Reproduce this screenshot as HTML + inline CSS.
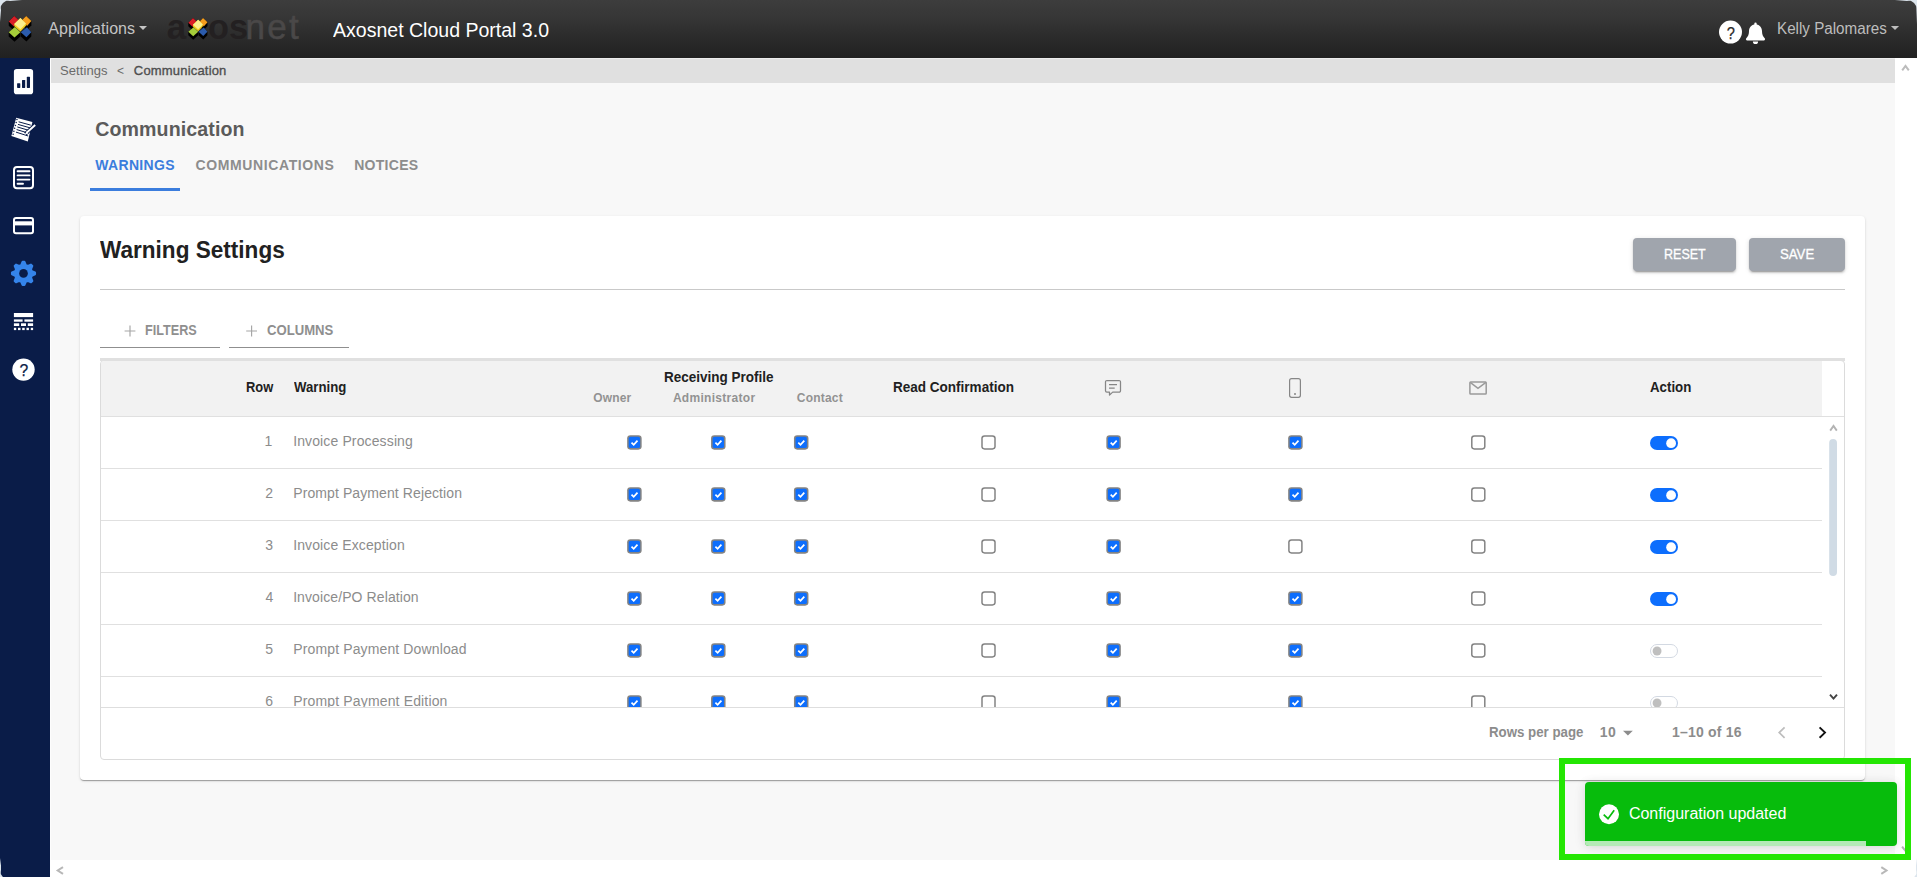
<!DOCTYPE html>
<html lang="en">
<head>
<meta charset="utf-8">
<title>Axosnet Cloud Portal 3.0</title>
<style>
*{box-sizing:border-box}
html,body{margin:0;padding:0}
body{width:1917px;height:877px;overflow:hidden;background:#dce5ed;font-family:'Liberation Sans',sans-serif;position:relative}
.win{position:absolute;left:0;top:0;width:1917px;height:880px;border-radius:10px;overflow:hidden;background:#f8f8f8}
.abs{position:absolute}
.t{position:absolute;white-space:pre;line-height:1;font-family:'Liberation Sans',sans-serif}
.topbar{left:0;top:0;width:1917px;height:58px;background:linear-gradient(#3d3d3d 0,#363636 30%,#2b2b2b 65%,#212121 100%)}
.side{left:0;top:58px;width:50px;height:819px;background:#0a1c48}
.crumb{left:50px;top:58px;width:1845px;height:25px;background:#e0e0e0}
.vscroll{left:1895px;top:58px;width:22px;height:802px;background:#fff}
.hscroll{left:50px;top:860px;width:1867px;height:17px;background:#fff}
.card{left:80px;top:216px;width:1785px;height:564px;background:#fff;border-radius:4px;box-shadow:0 2px 1px -1px rgba(0,0,0,.2),0 1px 1px 0 rgba(0,0,0,.14),0 1px 3px 0 rgba(0,0,0,.12)}
.btn{height:33px;top:238px;background:#a0a5ad;border-radius:4px;box-shadow:0 3px 1px -2px rgba(0,0,0,.2),0 2px 2px 0 rgba(0,0,0,.14),0 1px 5px 0 rgba(0,0,0,.12)}
.hr{left:100px;top:289px;width:1745px;height:1px;background:#c9c9c9}
.ul{top:347px;height:1px;background:#8f8f8f}
.table{left:100px;top:360px;width:1745px;height:400px;border:1px solid #dbdbdb;border-radius:4px;background:#fff;overflow:hidden}
.tbar{left:100px;top:358px;width:1745px;height:3px;background:#e0e0e0}
.thead{left:101px;top:361px;width:1721px;height:55px;background:#f2f2f2;border-top-left-radius:3px}
.theadline{left:101px;top:416px;width:1743px;height:1px;background:#e0e0e0}
.tbody{left:100px;top:417px;width:1745px;height:290px;overflow:hidden}
.tfootline{left:101px;top:707px;width:1743px;height:1px;background:#dedede}
.rb{position:absolute;left:1px;width:1721px;height:1px;background:#e0e0e0}
.cb{position:absolute;display:block}
.tg{position:absolute;width:28px;height:14px;border-radius:7px;border:1px solid #d5dbe3;background:#fff}
.tg i{position:absolute;left:2.5px;top:2px;width:8.6px;height:8.6px;border-radius:50%;background:#bdbdbd}
.tg.on{background:#0d6efd;border-color:#0d6efd}
.tg.on i{left:auto;right:1.4px;top:1.2px;width:9.8px;height:9.8px;background:#fff}
.toast{left:1585px;top:782px;width:312px;height:64px;background:#07bc0c;border-radius:4px;box-shadow:0 1px 10px rgba(0,0,0,.1),0 2px 15px rgba(0,0,0,.05);overflow:hidden}
.toast b{position:absolute;left:0;bottom:0;height:5px;width:281px;background:#b4eab6}
.mark{left:1559px;top:758px;width:352px;height:102px;border:6px solid #24e603}
</style>
</head>
<body>
<div class="win">
<div class="abs" style="left:0;top:0;width:1917px;height:877px">

<div class="abs topbar"></div>
<div class="abs side"></div>
<div class="abs crumb"></div>
<div class="abs vscroll"></div>
<div class="abs" style="left:50px;top:58px;width:1px;height:802px;background:#fdfdfd"></div>
<div class="abs" style="left:50px;top:58px;width:1845px;height:1px;background:#ececec"></div>
<div class="abs hscroll"></div>

<!-- main card -->
<div class="abs" style="left:90px;top:188px;width:90px;height:3px;background:#3b7ddd"></div>
<div class="abs card"></div>
<div class="abs btn" style="left:1633px;width:103px"></div>
<div class="abs btn" style="left:1749px;width:96px"></div>
<div class="abs hr"></div>
<div class="abs ul" style="left:100px;width:120px"></div>
<div class="abs ul" style="left:229px;width:120px"></div>
<div class="abs table"></div>
<div class="abs tbar"></div>
<div class="abs thead"></div>
<div class="abs theadline"></div>
<div class="abs tbody">
<svg class="cb" style="left:527px;top:18px" width="16" height="16" viewBox="0 0 16 16"><g transform="translate(0.15 0.15)"><rect width="14.5" height="14.5" rx="3.3" fill="#838383"/><rect x="1.55" y="1.55" width="11.4" height="11.4" rx="1.9" fill="#0d6efd"/><path d="M4.35 7.45 L6.55 9.65 L10.35 5.45" fill="none" stroke="#fff" stroke-width="1.75"/></g></svg>
<svg class="cb" style="left:611px;top:18px" width="16" height="16" viewBox="0 0 16 16"><g transform="translate(0.05 0.15)"><rect width="14.5" height="14.5" rx="3.3" fill="#838383"/><rect x="1.55" y="1.55" width="11.4" height="11.4" rx="1.9" fill="#0d6efd"/><path d="M4.35 7.45 L6.55 9.65 L10.35 5.45" fill="none" stroke="#fff" stroke-width="1.75"/></g></svg>
<svg class="cb" style="left:693px;top:18px" width="16" height="16" viewBox="0 0 16 16"><g transform="translate(0.95 0.15)"><rect width="14.5" height="14.5" rx="3.3" fill="#838383"/><rect x="1.55" y="1.55" width="11.4" height="11.4" rx="1.9" fill="#0d6efd"/><path d="M4.35 7.45 L6.55 9.65 L10.35 5.45" fill="none" stroke="#fff" stroke-width="1.75"/></g></svg>
<svg class="cb" style="left:881px;top:18px" width="16" height="16" viewBox="0 0 16 16"><g transform="translate(0.25 0.15)"><rect width="14.5" height="14.5" rx="3.3" fill="#838383"/><rect x="1.5" y="1.5" width="11.5" height="11.5" rx="1.9" fill="#fff"/></g></svg>
<svg class="cb" style="left:1006px;top:18px" width="16" height="16" viewBox="0 0 16 16"><g transform="translate(0.35 0.15)"><rect width="14.5" height="14.5" rx="3.3" fill="#838383"/><rect x="1.55" y="1.55" width="11.4" height="11.4" rx="1.9" fill="#0d6efd"/><path d="M4.35 7.45 L6.55 9.65 L10.35 5.45" fill="none" stroke="#fff" stroke-width="1.75"/></g></svg>
<svg class="cb" style="left:1188px;top:18px" width="16" height="16" viewBox="0 0 16 16"><g transform="translate(0.15 0.15)"><rect width="14.5" height="14.5" rx="3.3" fill="#838383"/><rect x="1.55" y="1.55" width="11.4" height="11.4" rx="1.9" fill="#0d6efd"/><path d="M4.35 7.45 L6.55 9.65 L10.35 5.45" fill="none" stroke="#fff" stroke-width="1.75"/></g></svg>
<svg class="cb" style="left:1371px;top:18px" width="16" height="16" viewBox="0 0 16 16"><g transform="translate(0.05 0.15)"><rect width="14.5" height="14.5" rx="3.3" fill="#838383"/><rect x="1.5" y="1.5" width="11.5" height="11.5" rx="1.9" fill="#fff"/></g></svg>
<svg class="cb" style="left:1550px;top:19px" width="28" height="14" viewBox="0 0 28 14"><rect width="28" height="14" rx="7" fill="#0d6efd"/><circle cx="21.1" cy="7.2" r="4.9" fill="#fff"/></svg>
<div class="rb" style="top:51px"></div>
<svg class="cb" style="left:527px;top:70px" width="16" height="16" viewBox="0 0 16 16"><g transform="translate(0.15 0.15)"><rect width="14.5" height="14.5" rx="3.3" fill="#838383"/><rect x="1.55" y="1.55" width="11.4" height="11.4" rx="1.9" fill="#0d6efd"/><path d="M4.35 7.45 L6.55 9.65 L10.35 5.45" fill="none" stroke="#fff" stroke-width="1.75"/></g></svg>
<svg class="cb" style="left:611px;top:70px" width="16" height="16" viewBox="0 0 16 16"><g transform="translate(0.05 0.15)"><rect width="14.5" height="14.5" rx="3.3" fill="#838383"/><rect x="1.55" y="1.55" width="11.4" height="11.4" rx="1.9" fill="#0d6efd"/><path d="M4.35 7.45 L6.55 9.65 L10.35 5.45" fill="none" stroke="#fff" stroke-width="1.75"/></g></svg>
<svg class="cb" style="left:693px;top:70px" width="16" height="16" viewBox="0 0 16 16"><g transform="translate(0.95 0.15)"><rect width="14.5" height="14.5" rx="3.3" fill="#838383"/><rect x="1.55" y="1.55" width="11.4" height="11.4" rx="1.9" fill="#0d6efd"/><path d="M4.35 7.45 L6.55 9.65 L10.35 5.45" fill="none" stroke="#fff" stroke-width="1.75"/></g></svg>
<svg class="cb" style="left:881px;top:70px" width="16" height="16" viewBox="0 0 16 16"><g transform="translate(0.25 0.15)"><rect width="14.5" height="14.5" rx="3.3" fill="#838383"/><rect x="1.5" y="1.5" width="11.5" height="11.5" rx="1.9" fill="#fff"/></g></svg>
<svg class="cb" style="left:1006px;top:70px" width="16" height="16" viewBox="0 0 16 16"><g transform="translate(0.35 0.15)"><rect width="14.5" height="14.5" rx="3.3" fill="#838383"/><rect x="1.55" y="1.55" width="11.4" height="11.4" rx="1.9" fill="#0d6efd"/><path d="M4.35 7.45 L6.55 9.65 L10.35 5.45" fill="none" stroke="#fff" stroke-width="1.75"/></g></svg>
<svg class="cb" style="left:1188px;top:70px" width="16" height="16" viewBox="0 0 16 16"><g transform="translate(0.15 0.15)"><rect width="14.5" height="14.5" rx="3.3" fill="#838383"/><rect x="1.55" y="1.55" width="11.4" height="11.4" rx="1.9" fill="#0d6efd"/><path d="M4.35 7.45 L6.55 9.65 L10.35 5.45" fill="none" stroke="#fff" stroke-width="1.75"/></g></svg>
<svg class="cb" style="left:1371px;top:70px" width="16" height="16" viewBox="0 0 16 16"><g transform="translate(0.05 0.15)"><rect width="14.5" height="14.5" rx="3.3" fill="#838383"/><rect x="1.5" y="1.5" width="11.5" height="11.5" rx="1.9" fill="#fff"/></g></svg>
<svg class="cb" style="left:1550px;top:71px" width="28" height="14" viewBox="0 0 28 14"><rect width="28" height="14" rx="7" fill="#0d6efd"/><circle cx="21.1" cy="7.2" r="4.9" fill="#fff"/></svg>
<div class="rb" style="top:103px"></div>
<svg class="cb" style="left:527px;top:122px" width="16" height="16" viewBox="0 0 16 16"><g transform="translate(0.15 0.15)"><rect width="14.5" height="14.5" rx="3.3" fill="#838383"/><rect x="1.55" y="1.55" width="11.4" height="11.4" rx="1.9" fill="#0d6efd"/><path d="M4.35 7.45 L6.55 9.65 L10.35 5.45" fill="none" stroke="#fff" stroke-width="1.75"/></g></svg>
<svg class="cb" style="left:611px;top:122px" width="16" height="16" viewBox="0 0 16 16"><g transform="translate(0.05 0.15)"><rect width="14.5" height="14.5" rx="3.3" fill="#838383"/><rect x="1.55" y="1.55" width="11.4" height="11.4" rx="1.9" fill="#0d6efd"/><path d="M4.35 7.45 L6.55 9.65 L10.35 5.45" fill="none" stroke="#fff" stroke-width="1.75"/></g></svg>
<svg class="cb" style="left:693px;top:122px" width="16" height="16" viewBox="0 0 16 16"><g transform="translate(0.95 0.15)"><rect width="14.5" height="14.5" rx="3.3" fill="#838383"/><rect x="1.55" y="1.55" width="11.4" height="11.4" rx="1.9" fill="#0d6efd"/><path d="M4.35 7.45 L6.55 9.65 L10.35 5.45" fill="none" stroke="#fff" stroke-width="1.75"/></g></svg>
<svg class="cb" style="left:881px;top:122px" width="16" height="16" viewBox="0 0 16 16"><g transform="translate(0.25 0.15)"><rect width="14.5" height="14.5" rx="3.3" fill="#838383"/><rect x="1.5" y="1.5" width="11.5" height="11.5" rx="1.9" fill="#fff"/></g></svg>
<svg class="cb" style="left:1006px;top:122px" width="16" height="16" viewBox="0 0 16 16"><g transform="translate(0.35 0.15)"><rect width="14.5" height="14.5" rx="3.3" fill="#838383"/><rect x="1.55" y="1.55" width="11.4" height="11.4" rx="1.9" fill="#0d6efd"/><path d="M4.35 7.45 L6.55 9.65 L10.35 5.45" fill="none" stroke="#fff" stroke-width="1.75"/></g></svg>
<svg class="cb" style="left:1188px;top:122px" width="16" height="16" viewBox="0 0 16 16"><g transform="translate(0.15 0.15)"><rect width="14.5" height="14.5" rx="3.3" fill="#838383"/><rect x="1.5" y="1.5" width="11.5" height="11.5" rx="1.9" fill="#fff"/></g></svg>
<svg class="cb" style="left:1371px;top:122px" width="16" height="16" viewBox="0 0 16 16"><g transform="translate(0.05 0.15)"><rect width="14.5" height="14.5" rx="3.3" fill="#838383"/><rect x="1.5" y="1.5" width="11.5" height="11.5" rx="1.9" fill="#fff"/></g></svg>
<svg class="cb" style="left:1550px;top:123px" width="28" height="14" viewBox="0 0 28 14"><rect width="28" height="14" rx="7" fill="#0d6efd"/><circle cx="21.1" cy="7.2" r="4.9" fill="#fff"/></svg>
<div class="rb" style="top:155px"></div>
<svg class="cb" style="left:527px;top:174px" width="16" height="16" viewBox="0 0 16 16"><g transform="translate(0.15 0.15)"><rect width="14.5" height="14.5" rx="3.3" fill="#838383"/><rect x="1.55" y="1.55" width="11.4" height="11.4" rx="1.9" fill="#0d6efd"/><path d="M4.35 7.45 L6.55 9.65 L10.35 5.45" fill="none" stroke="#fff" stroke-width="1.75"/></g></svg>
<svg class="cb" style="left:611px;top:174px" width="16" height="16" viewBox="0 0 16 16"><g transform="translate(0.05 0.15)"><rect width="14.5" height="14.5" rx="3.3" fill="#838383"/><rect x="1.55" y="1.55" width="11.4" height="11.4" rx="1.9" fill="#0d6efd"/><path d="M4.35 7.45 L6.55 9.65 L10.35 5.45" fill="none" stroke="#fff" stroke-width="1.75"/></g></svg>
<svg class="cb" style="left:693px;top:174px" width="16" height="16" viewBox="0 0 16 16"><g transform="translate(0.95 0.15)"><rect width="14.5" height="14.5" rx="3.3" fill="#838383"/><rect x="1.55" y="1.55" width="11.4" height="11.4" rx="1.9" fill="#0d6efd"/><path d="M4.35 7.45 L6.55 9.65 L10.35 5.45" fill="none" stroke="#fff" stroke-width="1.75"/></g></svg>
<svg class="cb" style="left:881px;top:174px" width="16" height="16" viewBox="0 0 16 16"><g transform="translate(0.25 0.15)"><rect width="14.5" height="14.5" rx="3.3" fill="#838383"/><rect x="1.5" y="1.5" width="11.5" height="11.5" rx="1.9" fill="#fff"/></g></svg>
<svg class="cb" style="left:1006px;top:174px" width="16" height="16" viewBox="0 0 16 16"><g transform="translate(0.35 0.15)"><rect width="14.5" height="14.5" rx="3.3" fill="#838383"/><rect x="1.55" y="1.55" width="11.4" height="11.4" rx="1.9" fill="#0d6efd"/><path d="M4.35 7.45 L6.55 9.65 L10.35 5.45" fill="none" stroke="#fff" stroke-width="1.75"/></g></svg>
<svg class="cb" style="left:1188px;top:174px" width="16" height="16" viewBox="0 0 16 16"><g transform="translate(0.15 0.15)"><rect width="14.5" height="14.5" rx="3.3" fill="#838383"/><rect x="1.55" y="1.55" width="11.4" height="11.4" rx="1.9" fill="#0d6efd"/><path d="M4.35 7.45 L6.55 9.65 L10.35 5.45" fill="none" stroke="#fff" stroke-width="1.75"/></g></svg>
<svg class="cb" style="left:1371px;top:174px" width="16" height="16" viewBox="0 0 16 16"><g transform="translate(0.05 0.15)"><rect width="14.5" height="14.5" rx="3.3" fill="#838383"/><rect x="1.5" y="1.5" width="11.5" height="11.5" rx="1.9" fill="#fff"/></g></svg>
<svg class="cb" style="left:1550px;top:175px" width="28" height="14" viewBox="0 0 28 14"><rect width="28" height="14" rx="7" fill="#0d6efd"/><circle cx="21.1" cy="7.2" r="4.9" fill="#fff"/></svg>
<div class="rb" style="top:207px"></div>
<svg class="cb" style="left:527px;top:226px" width="16" height="16" viewBox="0 0 16 16"><g transform="translate(0.15 0.15)"><rect width="14.5" height="14.5" rx="3.3" fill="#838383"/><rect x="1.55" y="1.55" width="11.4" height="11.4" rx="1.9" fill="#0d6efd"/><path d="M4.35 7.45 L6.55 9.65 L10.35 5.45" fill="none" stroke="#fff" stroke-width="1.75"/></g></svg>
<svg class="cb" style="left:611px;top:226px" width="16" height="16" viewBox="0 0 16 16"><g transform="translate(0.05 0.15)"><rect width="14.5" height="14.5" rx="3.3" fill="#838383"/><rect x="1.55" y="1.55" width="11.4" height="11.4" rx="1.9" fill="#0d6efd"/><path d="M4.35 7.45 L6.55 9.65 L10.35 5.45" fill="none" stroke="#fff" stroke-width="1.75"/></g></svg>
<svg class="cb" style="left:693px;top:226px" width="16" height="16" viewBox="0 0 16 16"><g transform="translate(0.95 0.15)"><rect width="14.5" height="14.5" rx="3.3" fill="#838383"/><rect x="1.55" y="1.55" width="11.4" height="11.4" rx="1.9" fill="#0d6efd"/><path d="M4.35 7.45 L6.55 9.65 L10.35 5.45" fill="none" stroke="#fff" stroke-width="1.75"/></g></svg>
<svg class="cb" style="left:881px;top:226px" width="16" height="16" viewBox="0 0 16 16"><g transform="translate(0.25 0.15)"><rect width="14.5" height="14.5" rx="3.3" fill="#838383"/><rect x="1.5" y="1.5" width="11.5" height="11.5" rx="1.9" fill="#fff"/></g></svg>
<svg class="cb" style="left:1006px;top:226px" width="16" height="16" viewBox="0 0 16 16"><g transform="translate(0.35 0.15)"><rect width="14.5" height="14.5" rx="3.3" fill="#838383"/><rect x="1.55" y="1.55" width="11.4" height="11.4" rx="1.9" fill="#0d6efd"/><path d="M4.35 7.45 L6.55 9.65 L10.35 5.45" fill="none" stroke="#fff" stroke-width="1.75"/></g></svg>
<svg class="cb" style="left:1188px;top:226px" width="16" height="16" viewBox="0 0 16 16"><g transform="translate(0.15 0.15)"><rect width="14.5" height="14.5" rx="3.3" fill="#838383"/><rect x="1.55" y="1.55" width="11.4" height="11.4" rx="1.9" fill="#0d6efd"/><path d="M4.35 7.45 L6.55 9.65 L10.35 5.45" fill="none" stroke="#fff" stroke-width="1.75"/></g></svg>
<svg class="cb" style="left:1371px;top:226px" width="16" height="16" viewBox="0 0 16 16"><g transform="translate(0.05 0.15)"><rect width="14.5" height="14.5" rx="3.3" fill="#838383"/><rect x="1.5" y="1.5" width="11.5" height="11.5" rx="1.9" fill="#fff"/></g></svg>
<svg class="cb" style="left:1550px;top:227px" width="28" height="14" viewBox="0 0 28 14"><rect x=".5" y=".5" width="27" height="13" rx="6.5" fill="#fff" stroke="#d3d9e2"/><circle cx="7.05" cy="7" r="4.45" fill="#bfbfbf"/></svg>
<div class="rb" style="top:259px"></div>
<svg class="cb" style="left:527px;top:278px" width="16" height="16" viewBox="0 0 16 16"><g transform="translate(0.15 0.15)"><rect width="14.5" height="14.5" rx="3.3" fill="#838383"/><rect x="1.55" y="1.55" width="11.4" height="11.4" rx="1.9" fill="#0d6efd"/><path d="M4.35 7.45 L6.55 9.65 L10.35 5.45" fill="none" stroke="#fff" stroke-width="1.75"/></g></svg>
<svg class="cb" style="left:611px;top:278px" width="16" height="16" viewBox="0 0 16 16"><g transform="translate(0.05 0.15)"><rect width="14.5" height="14.5" rx="3.3" fill="#838383"/><rect x="1.55" y="1.55" width="11.4" height="11.4" rx="1.9" fill="#0d6efd"/><path d="M4.35 7.45 L6.55 9.65 L10.35 5.45" fill="none" stroke="#fff" stroke-width="1.75"/></g></svg>
<svg class="cb" style="left:693px;top:278px" width="16" height="16" viewBox="0 0 16 16"><g transform="translate(0.95 0.15)"><rect width="14.5" height="14.5" rx="3.3" fill="#838383"/><rect x="1.55" y="1.55" width="11.4" height="11.4" rx="1.9" fill="#0d6efd"/><path d="M4.35 7.45 L6.55 9.65 L10.35 5.45" fill="none" stroke="#fff" stroke-width="1.75"/></g></svg>
<svg class="cb" style="left:881px;top:278px" width="16" height="16" viewBox="0 0 16 16"><g transform="translate(0.25 0.15)"><rect width="14.5" height="14.5" rx="3.3" fill="#838383"/><rect x="1.5" y="1.5" width="11.5" height="11.5" rx="1.9" fill="#fff"/></g></svg>
<svg class="cb" style="left:1006px;top:278px" width="16" height="16" viewBox="0 0 16 16"><g transform="translate(0.35 0.15)"><rect width="14.5" height="14.5" rx="3.3" fill="#838383"/><rect x="1.55" y="1.55" width="11.4" height="11.4" rx="1.9" fill="#0d6efd"/><path d="M4.35 7.45 L6.55 9.65 L10.35 5.45" fill="none" stroke="#fff" stroke-width="1.75"/></g></svg>
<svg class="cb" style="left:1188px;top:278px" width="16" height="16" viewBox="0 0 16 16"><g transform="translate(0.15 0.15)"><rect width="14.5" height="14.5" rx="3.3" fill="#838383"/><rect x="1.55" y="1.55" width="11.4" height="11.4" rx="1.9" fill="#0d6efd"/><path d="M4.35 7.45 L6.55 9.65 L10.35 5.45" fill="none" stroke="#fff" stroke-width="1.75"/></g></svg>
<svg class="cb" style="left:1371px;top:278px" width="16" height="16" viewBox="0 0 16 16"><g transform="translate(0.05 0.15)"><rect width="14.5" height="14.5" rx="3.3" fill="#838383"/><rect x="1.5" y="1.5" width="11.5" height="11.5" rx="1.9" fill="#fff"/></g></svg>
<svg class="cb" style="left:1550px;top:279px" width="28" height="14" viewBox="0 0 28 14"><rect x=".5" y=".5" width="27" height="13" rx="6.5" fill="#fff" stroke="#d3d9e2"/><circle cx="7.05" cy="7" r="4.45" fill="#bfbfbf"/></svg>
<div class="rb" style="top:311px"></div>
<span class="t" style="left:164.38px;top:17px;font-size:14px;font-weight:400;color:#8c8c8c;">1</span>
<span class="t" style="left:193.14px;top:17px;font-size:14px;font-weight:400;color:#8c8c8c;letter-spacing:0.129px;">Invoice Processing</span>
<span class="t" style="left:165.31px;top:69px;font-size:14px;font-weight:400;color:#8c8c8c;">2</span>
<span class="t" style="left:193.25px;top:69px;font-size:14px;font-weight:400;color:#8c8c8c;letter-spacing:0.096px;">Prompt Payment Rejection</span>
<span class="t" style="left:165.29px;top:121px;font-size:14px;font-weight:400;color:#8c8c8c;">3</span>
<span class="t" style="left:193.14px;top:121px;font-size:14px;font-weight:400;color:#8c8c8c;letter-spacing:0.113px;">Invoice Exception</span>
<span class="t" style="left:165.38px;top:173px;font-size:14px;font-weight:400;color:#8c8c8c;">4</span>
<span class="t" style="left:193.14px;top:173px;font-size:14px;font-weight:400;color:#8c8c8c;letter-spacing:0.100px;">Invoice/PO Relation</span>
<span class="t" style="left:165.31px;top:225px;font-size:14px;font-weight:400;color:#8c8c8c;">5</span>
<span class="t" style="left:193.25px;top:225px;font-size:14px;font-weight:400;color:#8c8c8c;letter-spacing:0.129px;">Prompt Payment Download</span>
<span class="t" style="left:165.35px;top:277px;font-size:14px;font-weight:400;color:#8c8c8c;">6</span>
<span class="t" style="left:193.25px;top:277px;font-size:14px;font-weight:400;color:#8c8c8c;letter-spacing:0.150px;">Prompt Payment Edition</span>
</div>
<div class="abs tfootline"></div>

<svg class="abs" style="left:1895px;top:840px" width="22" height="20" viewBox="1895 840 22 20"><path d="M1902.1 846.6 L1905.5 850.9 L1908.9 846.6" fill="none" stroke="#b4b0b6" stroke-width="2"/></svg>
<!-- toast -->
<div class="abs toast"><b></b></div>
<div class="abs mark"></div>

<svg class="abs" style="left:0;top:0" width="1917" height="877" viewBox="0 0 1917 877">
<g transform="translate(0 0) scale(1.0)">
<polygon points="8.72,21.50 14.26,15.95 18.30,19.85 18.30,24.05 13.85,30.60 8.72,25.70" fill="#000"/>
<polygon points="22.40,19.65 26.17,15.95 31.40,21.08 31.40,25.28 27.00,30.20 22.40,23.85" fill="#000"/>
<polygon points="8.70,32.20 14.90,27.00 20.40,32.20 20.40,36.40 14.50,41.70 8.70,36.40" fill="#000"/>
<polygon points="20.80,32.20 27.00,27.20 31.30,32.20 31.30,36.40 26.40,41.50 20.80,36.40" fill="#000"/>
<polygon points="14.26,15.95 18.30,19.85 13.85,26.40 8.72,21.50" fill="#d81e26"/>
<polygon points="26.17,15.95 31.40,21.08 27.00,26.00 22.40,19.65" fill="#f59d1c"/>
<polygon points="14.90,27.00 20.40,32.20 14.50,37.50 8.70,32.20" fill="#a5cd39"/>
<polygon points="27.00,27.20 31.30,32.20 26.40,37.30 20.80,32.20" fill="#2b5bab"/>
<polygon points="14.26,23.96 20.40,18.00 25.96,23.50 25.96,25.70 20.40,31.50 14.26,26.16" fill="#f3cf1d"/>
<polygon points="20.40,18.00 25.96,23.50 20.40,29.30 14.26,23.96" fill="#fbee8d"/>
</g>
<g transform="translate(180.93980000000002 4.506300000000001) scale(0.846)">
<polygon points="8.72,21.50 14.26,15.95 18.30,19.85 18.30,24.05 13.85,30.60 8.72,25.70" fill="#000"/>
<polygon points="22.40,19.65 26.17,15.95 31.40,21.08 31.40,25.28 27.00,30.20 22.40,23.85" fill="#000"/>
<polygon points="8.70,32.20 14.90,27.00 20.40,32.20 20.40,36.40 14.50,41.70 8.70,36.40" fill="#000"/>
<polygon points="20.80,32.20 27.00,27.20 31.30,32.20 31.30,36.40 26.40,41.50 20.80,36.40" fill="#000"/>
<polygon points="14.26,15.95 18.30,19.85 13.85,26.40 8.72,21.50" fill="#d81e26"/>
<polygon points="26.17,15.95 31.40,21.08 27.00,26.00 22.40,19.65" fill="#f59d1c"/>
<polygon points="14.90,27.00 20.40,32.20 14.50,37.50 8.70,32.20" fill="#a5cd39"/>
<polygon points="27.00,27.20 31.30,32.20 26.40,37.30 20.80,32.20" fill="#2b5bab"/>
<polygon points="14.26,23.96 20.40,18.00 25.96,23.50 25.96,25.70 20.40,31.50 14.26,26.16" fill="#f3cf1d"/>
<polygon points="20.40,18.00 25.96,23.50 20.40,29.30 14.26,23.96" fill="#fbee8d"/>
</g>
<path d="M139 26 h8 l-4 4 z" fill="#c4c4c4"/>
<path d="M1890.9 26 h8.2 l-4.1 4.1 z" fill="#bdbdbd"/>
<circle cx="1730.5" cy="32.1" r="11.5" fill="#fff"/>
<path d="M1754.3 23.7 a1.2 1.2 0 0 1 2.4 0 v0.8 c3.1 .6 5.3 3.3 5.3 6.6 c0 3.2 .9 5.4 2.7 7.2 c.8 .8 .3 2.1 -.9 2.1 h-16.6 c-1.2 0 -1.7 -1.3 -.9 -2.1 c1.8 -1.8 2.7 -4 2.7 -7.2 c0 -3.3 2.2 -6 5.3 -6.6 z" fill="#fff"/>
<path d="M1752.9 41.4 h5.2 a2.6 2.6 0 0 1 -5.2 0 z" fill="#fff"/>
<rect x="13.9" y="68.9" width="19.2" height="25.3" rx="2.8" fill="#fff"/>
<rect x="17.1" y="83.2" width="3.2" height="4.7" rx=".6" fill="#0a1c48"/>
<rect x="22" y="80" width="3.2" height="7.9" rx=".6" fill="#0a1c48"/>
<rect x="26.8" y="76.8" width="3.2" height="11.1" rx=".6" fill="#0a1c48"/>
<polygon points="16.2,117.8 32.4,122.1 27.8,141.5 11.4,136" fill="#fff"/>
<path d="M18.63 121.79 L30.81 125.17" stroke="#0a1c48" stroke-width="1"/>
<path d="M17.96 124.38 L30.16 127.88" stroke="#0a1c48" stroke-width="1"/>
<path d="M17.30 126.96 L29.52 130.59" stroke="#0a1c48" stroke-width="1"/>
<path d="M16.63 129.54 L28.87 133.30" stroke="#0a1c48" stroke-width="1"/>
<path d="M15.97 132.12 L28.22 136.00" stroke="#0a1c48" stroke-width="1"/>
<circle cx="16.95" cy="119.56" r=".75" fill="#0a1c48"/>
<circle cx="16.19" cy="122.49" r=".75" fill="#0a1c48"/>
<circle cx="15.42" cy="125.41" r=".75" fill="#0a1c48"/>
<circle cx="14.65" cy="128.34" r=".75" fill="#0a1c48"/>
<circle cx="13.89" cy="131.27" r=".75" fill="#0a1c48"/>
<circle cx="13.12" cy="134.19" r=".75" fill="#0a1c48"/>
<path d="M35.2 125 L25.4 133.9" stroke="#0a1c48" stroke-width="3.8" stroke-linecap="butt"/>
<path d="M35.2 125 L26.6 132.8" stroke="#fff" stroke-width="1.9" stroke-linecap="butt"/>
<path d="M26.9 131.2 L24.6 134.6 L28.4 133.6 z" fill="#fff"/>
<rect x="14" y="167" width="19" height="21.3" rx="3" fill="none" stroke="#fff" stroke-width="2"/>
<path d="M17.6 171.2 H29.5" stroke="#fff" stroke-width="1.9" stroke-linecap="round"/>
<path d="M17.6 175.4 H29.5" stroke="#fff" stroke-width="1.9" stroke-linecap="round"/>
<path d="M17.6 179.6 H29.5" stroke="#fff" stroke-width="1.9" stroke-linecap="round"/>
<path d="M17.6 183.8 H23.0" stroke="#fff" stroke-width="1.9" stroke-linecap="round"/>
<rect x="14" y="218" width="19" height="15.2" rx="2" fill="none" stroke="#fff" stroke-width="2"/>
<rect x="14" y="221.3" width="19" height="4.1" fill="#fff"/>
<path d="M21.27 265.09 L22.60 261.94 L24.40 261.94 L25.73 265.09 L26.71 265.64 L27.80 265.95 L30.97 264.66 L32.24 265.93 L30.95 269.10 L31.26 270.19 L31.81 271.17 L34.96 272.50 L34.96 274.30 L31.81 275.63 L31.26 276.61 L30.95 277.70 L32.24 280.87 L30.97 282.14 L27.80 280.85 L26.71 281.16 L25.73 281.71 L24.40 284.86 L22.60 284.86 L21.27 281.71 L20.29 281.16 L19.20 280.85 L16.03 282.14 L14.76 280.87 L16.05 277.70 L15.74 276.61 L15.19 275.63 L12.04 274.30 L12.04 272.50 L15.19 271.17 L15.74 270.19 L16.05 269.10 L14.76 265.93 L16.03 264.66 L19.20 265.95 L20.29 265.64Z" fill="#3584ea" stroke="#3584ea" stroke-width="2.2" stroke-linejoin="round"/><circle cx="23.5" cy="273.4" r="4.35" fill="#0a1c48"/>
<rect x="13.9" y="313" width="19.2" height="4.1" fill="#fff"/>
<rect x="13.9" y="319.4" width="8.70" height="2.3" fill="#fff"/>
<rect x="24.4" y="319.4" width="8.70" height="2.3" fill="#fff"/>
<rect x="13.9" y="323.3" width="5.30" height="2.7" fill="#fff"/>
<rect x="21" y="323.3" width="5.00" height="2.7" fill="#fff"/>
<rect x="27.8" y="323.3" width="5.30" height="2.7" fill="#fff"/>
<rect x="13.9" y="327.8" width="2.30" height="2.3" fill="#fff"/>
<rect x="18" y="327.8" width="2.50" height="2.3" fill="#fff"/>
<rect x="22.2" y="327.8" width="2.50" height="2.3" fill="#fff"/>
<rect x="26.5" y="327.8" width="2.40" height="2.3" fill="#fff"/>
<rect x="30.8" y="327.8" width="2.30" height="2.3" fill="#fff"/>
<circle cx="23.5" cy="369.6" r="11.2" fill="#fff"/>
<path d="M124.6 331 H135.4 M130 325.6 V336.4" stroke="#a6a6a6" stroke-width="1.15" fill="none"/>
<path d="M246.2 331 H257.0 M251.6 325.6 V336.4" stroke="#a6a6a6" stroke-width="1.15" fill="none"/>
<path d="M1106.9 380.5 h12.2 a1.4 1.4 0 0 1 1.4 1.4 v8.8 a1.4 1.4 0 0 1 -1.4 1.4 h-6.4 l-3.2 3 v-3 h-2.6 a1.4 1.4 0 0 1 -1.4 -1.4 v-8.8 a1.4 1.4 0 0 1 1.4 -1.4 z" fill="none" stroke="#868686" stroke-width="1.25" stroke-linejoin="round"/>
<path d="M1109 384.6 H1117 M1109 388 H1114.7" stroke="#868686" stroke-width="1.25"/>
<rect x="1289.6" y="378.7" width="10.8" height="18.6" rx="2" fill="none" stroke="#868686" stroke-width="1.2"/>
<circle cx="1295" cy="394.1" r="1" fill="#868686"/>
<rect x="1469.9" y="381.9" width="16.3" height="12.2" rx=".8" fill="none" stroke="#9a9a9a" stroke-width="1.5"/>
<path d="M1470.2 382.3 L1478 388.4 L1485.9 382.3" fill="none" stroke="#9a9a9a" stroke-width="1.5"/>
<path d="M1830.2 430.6 L1833.5 426 L1836.8 430.6" fill="none" stroke="#b3b3b3" stroke-width="1.9" stroke-linecap="butt" stroke-linejoin="miter"/>
<rect x="1829.2" y="439" width="7.8" height="137" rx="3.9" fill="#d0dbe5"/>
<path d="M1830 694.6 L1833.5 698.6 L1837 694.6" fill="none" stroke="#444" stroke-width="1.9" stroke-linecap="butt" stroke-linejoin="miter"/>
<path d="M1902.2 70.4 L1905.5 66 L1908.8 70.4" fill="none" stroke="#bcbcbc" stroke-width="2" stroke-linecap="butt" stroke-linejoin="miter"/>
<path d="M63 867.1 L57.7 870.5 L63 873.9" fill="none" stroke="#b8b8b8" stroke-width="2" stroke-linecap="butt" stroke-linejoin="miter"/>
<path d="M1881.3 867.1 L1886.5 870.5 L1881.3 873.9" fill="none" stroke="#b8b8b8" stroke-width="2" stroke-linecap="butt" stroke-linejoin="miter"/>
<path d="M1623 730.7 h9.8 l-4.9 4.9 z" fill="#8c8c8c"/>
<path d="M1784.6 727.4 L1779.2 732.6 L1784.6 737.8" fill="none" stroke="#bdbdbd" stroke-width="1.7" stroke-linecap="butt" stroke-linejoin="miter"/>
<path d="M1819.6 727.4 L1825 732.6 L1819.6 737.8" fill="none" stroke="#111" stroke-width="1.9" stroke-linecap="butt" stroke-linejoin="miter"/>
<circle cx="1609" cy="814.2" r="10" fill="#fff"/>
<path d="M1603.7 814.6 L1608 818.7 L1614.2 810.2" fill="none" stroke="#07bc0c" stroke-width="1.7"/>
</svg>


<span class="t" style="left:48.21px;top:21px;font-size:16px;font-weight:400;color:#c4c4c4;letter-spacing:0.053px;">Applications</span>
<span class="t" style="left:332.68px;top:21px;font-size:19.6px;font-weight:400;color:#ffffff;transform:scaleX(0.9966);transform-origin:0 0;">Axosnet Cloud Portal 3.0</span>
<span class="t" style="left:1776.99px;top:21px;font-size:15.6px;font-weight:400;color:#bdbdbd;transform:scaleX(0.9745);transform-origin:0 0;">Kelly Palomares</span>
<span class="t" style="left:166.74px;top:9px;font-size:35px;font-weight:700;color:#232021;">a</span>
<span class="t" style="left:207.59px;top:9px;font-size:35px;font-weight:700;color:#232021;transform:scaleX(0.9806);transform-origin:0 0;">os</span>
<span class="t" style="left:245.59px;top:9px;font-size:35px;font-weight:400;color:#4a4848;letter-spacing:2.233px;-webkit-text-stroke:0.5px #4a4848;">net</span>
<span class="t" style="left:1725.59px;top:25px;font-size:17px;font-weight:400;color:#2a2a2a;-webkit-text-stroke:0.25px #2a2a2a;transform:scaleX(.86);transform-origin:50% 50%;">?</span>
<span class="t" style="left:18.59px;top:362px;font-size:17px;font-weight:400;color:#0a1c48;-webkit-text-stroke:0.25px #0a1c48;transform:scaleX(.92);transform-origin:50% 50%;">?</span>
<span class="t" style="left:60.08px;top:64px;font-size:13px;font-weight:400;color:#6a6a6a;letter-spacing:0.069px;">Settings</span>
<span class="t" style="left:117.10px;top:65px;font-size:12px;font-weight:400;color:#6a6a6a;">&lt;</span>
<span class="t" style="left:133.87px;top:64px;font-size:13px;font-weight:400;color:#4f4f4f;letter-spacing:0.180px;-webkit-text-stroke:0.35px #4f4f4f;">Communication</span>
<span class="t" style="left:95.20px;top:120px;font-size:19.6px;font-weight:700;color:#5b5b5b;letter-spacing:0.106px;">Communication</span>
<span class="t" style="left:95.28px;top:158px;font-size:14px;font-weight:700;color:#3b7ddd;letter-spacing:0.320px;">WARNINGS</span>
<span class="t" style="left:195.47px;top:158px;font-size:14px;font-weight:700;color:#8d8d8d;letter-spacing:0.619px;">COMMUNICATIONS</span>
<span class="t" style="left:354.21px;top:158px;font-size:14px;font-weight:700;color:#8d8d8d;letter-spacing:0.285px;">NOTICES</span>
<span class="t" style="left:100.29px;top:239px;font-size:23.5px;font-weight:700;color:#212121;transform:scaleX(0.9603);transform-origin:0 0;">Warning Settings</span>
<span class="t" style="left:1663.58px;top:247px;font-size:14px;font-weight:400;color:#ffffff;transform:scaleX(0.8941);transform-origin:0 0;-webkit-text-stroke:0.3px #fff;">RESET</span>
<span class="t" style="left:1780.13px;top:247px;font-size:14px;font-weight:400;color:#ffffff;transform:scaleX(0.9410);transform-origin:0 0;-webkit-text-stroke:0.3px #fff;">SAVE</span>
<span class="t" style="left:145.02px;top:323px;font-size:14px;font-weight:700;color:#8f8f8f;transform:scaleX(0.9032);transform-origin:0 0;">FILTERS</span>
<span class="t" style="left:266.61px;top:323px;font-size:14px;font-weight:700;color:#8f8f8f;transform:scaleX(0.9372);transform-origin:0 0;">COLUMNS</span>
<span class="t" style="left:245.80px;top:380px;font-size:14px;font-weight:700;color:#212121;transform:scaleX(0.9186);transform-origin:0 0;">Row</span>
<span class="t" style="left:293.99px;top:380px;font-size:14px;font-weight:700;color:#212121;transform:scaleX(0.9423);transform-origin:0 0;">Warning</span>
<span class="t" style="left:663.95px;top:370px;font-size:14px;font-weight:700;color:#212121;transform:scaleX(0.9630);transform-origin:0 0;">Receiving Profile</span>
<span class="t" style="left:593.36px;top:392px;font-size:12px;font-weight:700;color:#929292;letter-spacing:0.100px;">Owner</span>
<span class="t" style="left:672.90px;top:392px;font-size:12px;font-weight:700;color:#929292;letter-spacing:0.297px;">Administrator</span>
<span class="t" style="left:796.86px;top:392px;font-size:12px;font-weight:700;color:#929292;letter-spacing:0.188px;">Contact</span>
<span class="t" style="left:892.65px;top:380px;font-size:14px;font-weight:700;color:#212121;transform:scaleX(0.9658);transform-origin:0 0;">Read Confirmation</span>
<span class="t" style="left:1650.26px;top:380px;font-size:14px;font-weight:700;color:#212121;transform:scaleX(0.9483);transform-origin:0 0;">Action</span>
<span class="t" style="left:1488.87px;top:725px;font-size:14px;font-weight:700;color:#8c8c8c;transform:scaleX(0.9485);transform-origin:0 0;">Rows per page</span>
<span class="t" style="left:1599.72px;top:725px;font-size:14px;font-weight:700;color:#8c8c8c;letter-spacing:0.373px;">10</span>
<span class="t" style="left:1671.92px;top:725px;font-size:14px;font-weight:700;color:#8c8c8c;letter-spacing:0.222px;">1–10 of 16</span>
<span class="t" style="left:1628.92px;top:806px;font-size:16px;font-weight:400;color:#ffffff;">Configuration updated</span>
<div class="abs" style="left:0;top:0;width:22px;height:1px;background:linear-gradient(90deg,#dce5ed 45%,rgba(220,229,237,0))"></div>
<div class="abs" style="left:0;top:0;width:1px;height:22px;background:linear-gradient(180deg,#dce5ed 45%,rgba(220,229,237,0))"></div>
<div class="abs" style="left:1895px;top:0;width:22px;height:1px;background:linear-gradient(270deg,#dce5ed 45%,rgba(220,229,237,0))"></div>
<div class="abs" style="left:1916px;top:0;width:1px;height:24px;opacity:.6;background:linear-gradient(180deg,#dce5ed 40%,rgba(220,229,237,0))"></div>
<div class="abs" style="left:0;top:858px;width:1px;height:19px;background:linear-gradient(0deg,#dce5ed 60%,rgba(220,229,237,0))"></div>
<div class="abs" style="left:1916px;top:858px;width:1px;height:19px;background:linear-gradient(0deg,#dce5ed 60%,rgba(220,229,237,0))"></div>
</div>
</div>
</body>
</html>
